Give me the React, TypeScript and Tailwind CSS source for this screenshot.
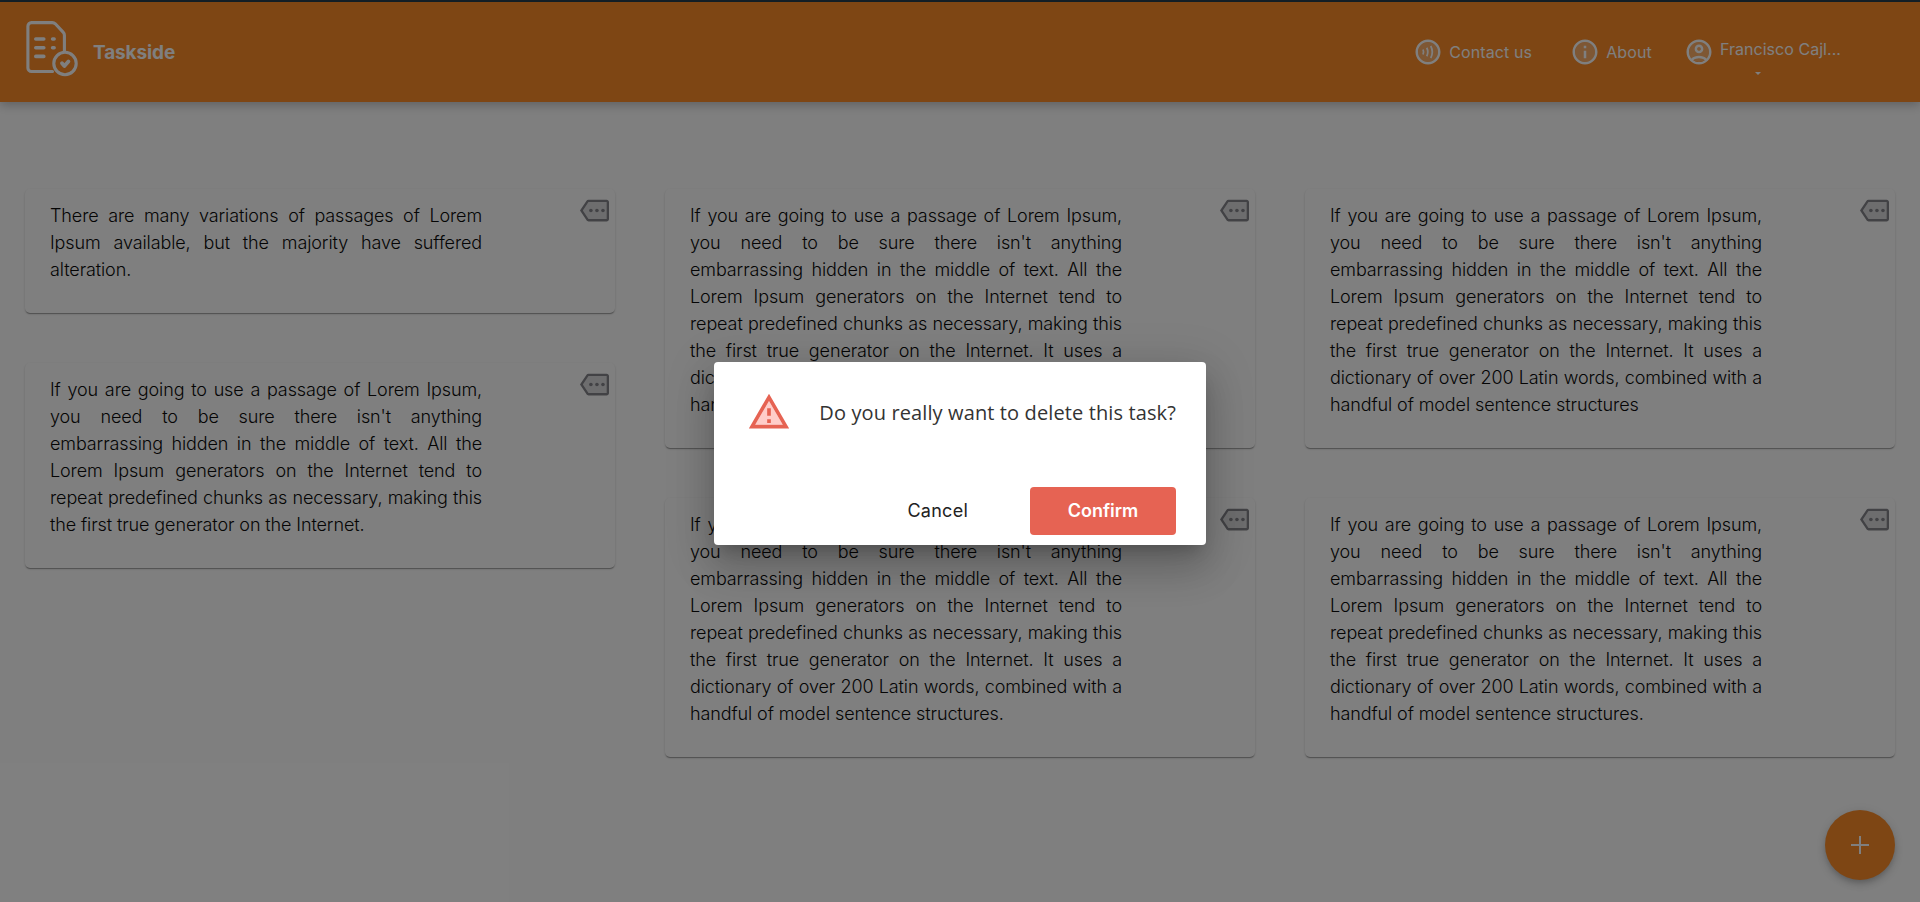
import React from "react";

const base =
  "If you are going to use a passage of Lorem Ipsum, you need to be sure there isn't anything embarrassing hidden in the middle of text. All the Lorem Ipsum generators on the Internet tend to repeat predefined chunks as necessary, making this the first true generator on the Internet.";
const long = base + " It uses a dictionary of over 200 Latin words, combined with a handful of model sentence structures";

const columns: string[][] = [
  [
    "There are many variations of passages of Lorem Ipsum available, but the majority have suffered alteration.",
    base,
  ],
  [long + ".", long + "."],
  [long, long + "."],
];

function MoreIcon() {
  return (
    <svg viewBox="0 0 24 24" className="size-[29px] shrink-0 fill-[#85858a]">
      <path opacity=".3" d="M7.06 5 2.4 12l4.67 7H22V5H7.06z" />
      <path d="M22 3H7c-.69 0-1.23.35-1.59.88L0 12l5.41 8.11c.36.53.97.89 1.66.89H22c1.1 0 2-.9 2-2V5c0-1.1-.9-2-2-2zm0 16H7.07L2.4 12l4.66-7H22v14z" />
      <circle cx="9" cy="12" r="1.5" />
      <circle cx="14" cy="12" r="1.5" />
      <circle cx="19" cy="12" r="1.5" />
    </svg>
  );
}

function Logo() {
  return (
    <svg viewBox="0 0 52 56" className="h-[56px] w-[52px] fill-none stroke-white" strokeWidth="3.1" strokeLinecap="round" strokeLinejoin="round">
      <path d="M26.5 50.5H5.5a3.6 3.6 0 0 1-3.6-3.6V5.2a3.6 3.6 0 0 1 3.6-3.6h20.8c1.2 0 2.2.4 3 1.2l8 8.6c.8.8 1.1 1.7 1.1 2.8V30" />
      <circle cx="39" cy="42.5" r="11.2" />
      <path d="M9.8 18h8M9.8 26.8h8M9.8 35.4h8M26.6 18h1.5M26.6 26.8h1.5" strokeWidth="3.6" />
      <path d="M36 42.2l2.4 2.8 4-4.6" strokeWidth="3.8" />
    </svg>
  );
}

function NavIcon({ children }: { children: React.ReactNode }) {
  return (
    <svg viewBox="0 0 24 24" className="size-[30px] shrink-0 fill-white">
      {children}
    </svg>
  );
}

const ring =
  "M12 2C6.48 2 2 6.48 2 12s4.48 10 10 10 10-4.48 10-10S17.52 2 12 2zm0 18c-4.41 0-8-3.59-8-8s3.59-8 8-8 8 3.59 8 8-3.59 8-8 8z";

export default function App() {
  return (
    <div className="relative h-[902px] w-full overflow-hidden bg-white font-['Inter',sans-serif] text-[#0a0a0a]">
      <div className="h-[2px] bg-[#284050]" />
      <header className="flex h-[100px] items-center bg-[#fc8c28] text-base tracking-[0.12px] text-white shadow-[0_3px_10px_rgba(0,0,0,.25)]">
        <div className="mb-[6px] ml-[26px]">
          <Logo />
        </div>
        <span className="mt-[2px] ml-[15px] text-[19px] font-bold tracking-[-0.12px]">Taskside</span>
        <nav className="mr-[79px] ml-auto flex items-center">
          <a className="flex items-center gap-[6px]">
            <NavIcon>
              <circle cx="12" cy="12" r="8" opacity=".3" />
              <path d={ring} />
              <path d="M8 10q.9 2 0 4M11 8.6q1.7 3.4 0 6.8M14.2 7.2q2.5 4.8 0 9.6" className="fill-none stroke-white" strokeWidth="1.4" />
            </NavIcon>
            Contact us
          </a>
          <a className="ml-[38px] flex items-center gap-[6px]">
            <NavIcon>
              <circle cx="12" cy="12" r="8" opacity=".3" />
              <path d={ring} />
              <path d="M11 7h2v2h-2zM11 11h2v6h-2z" />
            </NavIcon>
            About
          </a>
          <a className="ml-[32px] flex items-center gap-[6px]">
            <NavIcon>
              <circle cx="12" cy="12" r="8" opacity=".3" />
              <path d="M12 2C6.48 2 2 6.48 2 12s4.48 10 10 10 10-4.48 10-10S17.52 2 12 2zM7.35 18.5C8.66 17.56 10.26 17 12 17s3.34.56 4.65 1.5C15.34 19.44 13.74 20 12 20s-3.34-.56-4.65-1.5zm10.79-1.38C16.45 15.8 14.32 15 12 15s-4.45.8-6.14 2.12C4.7 15.73 4 13.95 4 12c0-4.42 3.58-8 8-8s8 3.58 8 8c0 1.95-.7 3.73-1.86 5.12z" />
              <path d="M12 6c-1.93 0-3.5 1.57-3.5 3.5S10.07 13 12 13s3.5-1.57 3.5-3.5S13.93 6 12 6zm0 5c-.83 0-1.5-.67-1.5-1.5S11.17 8 12 8s1.5.67 1.5 1.5S12.83 11 12 11z" />
            </NavIcon>
            <span className="flex flex-col pt-[7px]">
              <span className="leading-6 tracking-[0.04px]">Francisco Cajl...</span>
              <svg viewBox="0 0 6 3" className="mt-[11px] ml-[35px] h-[3px] w-[6px] fill-white">
                <path d="M0 0h6L3 3z" />
              </svg>
            </span>
          </a>
        </nav>
      </header>

      <main className="grid grid-cols-3 items-start gap-[50px] px-[25px] pt-[87px]">
        {columns.map((column, i) => (
          <section key={i} className="flex flex-col gap-[50px]">
            {column.map((text, j) => (
              <article
                key={j}
                className="flex items-start justify-between rounded-[5px] pt-[13px] pr-[6px] pb-[30px] pl-[25px] shadow-[0_2px_1px_-1px_rgba(0,0,0,.2),0_1px_1px_rgba(0,0,0,.14),0_1px_3px_rgba(0,0,0,.12)]"
              >
                <p className="w-[432px] text-justify text-[18px] leading-[27px] font-light tracking-[-0.11px]">{text}</p>
                <div className="-mt-[6px]">
                  <MoreIcon />
                </div>
              </article>
            ))}
          </section>
        ))}
      </main>

      <button className="absolute right-[25px] bottom-[22px] flex size-[70px] items-center justify-center rounded-full bg-[#fc8c28] shadow-[0_3px_5px_-1px_rgba(0,0,0,.14),0_5px_10px_rgba(0,0,0,.12),0_1px_14px_rgba(0,0,0,.08)]">
        <svg viewBox="0 0 18 18" className="size-[18px] fill-white">
          <path d="M8 0h2v8h8v2h-8v8H8v-8H0V8h8z" />
        </svg>
      </button>

      <div className="absolute inset-0 flex items-start justify-center bg-black/50">
        <div
          role="dialog"
          className="mt-[362px] flex h-[183px] w-[492px] flex-col justify-between rounded-[4px] bg-white pt-[28px] pr-[30px] pb-[10px] pl-[33px] shadow-[0_11px_15px_-7px_rgba(0,0,0,.2),0_24px_38px_3px_rgba(0,0,0,.14),0_9px_46px_8px_rgba(0,0,0,.12)]"
        >
          <div className="flex items-center justify-between">
            <svg viewBox="0 0 24 24" className="size-[44px] fill-[#e66353]">
              <path className="fill-[#ffcdc9]" d="M4.47 19h15.06L12 5.99 4.47 19z" />
              <path d="M1 21h22L12 2 1 21zm3.47-2L12 5.99 19.53 19H4.47zM11 16h2v2h-2zM11 10h2v4h-2z" />
            </svg>
            <p className="mt-px font-['Open_Sans',sans-serif] text-[20px] tracking-[0.12px] text-[#333]">Do you really want to delete this task?</p>
          </div>
          <div className="flex items-center justify-end text-[18px]">
            <button className="mr-[62px] pb-px tracking-[0.25px] text-[#222]">Cancel</button>
            <button className="h-[48px] w-[146px] rounded-[4px] bg-[#e66353] pb-px font-semibold text-white">Confirm</button>
          </div>
        </div>
      </div>
    </div>
  );
}
